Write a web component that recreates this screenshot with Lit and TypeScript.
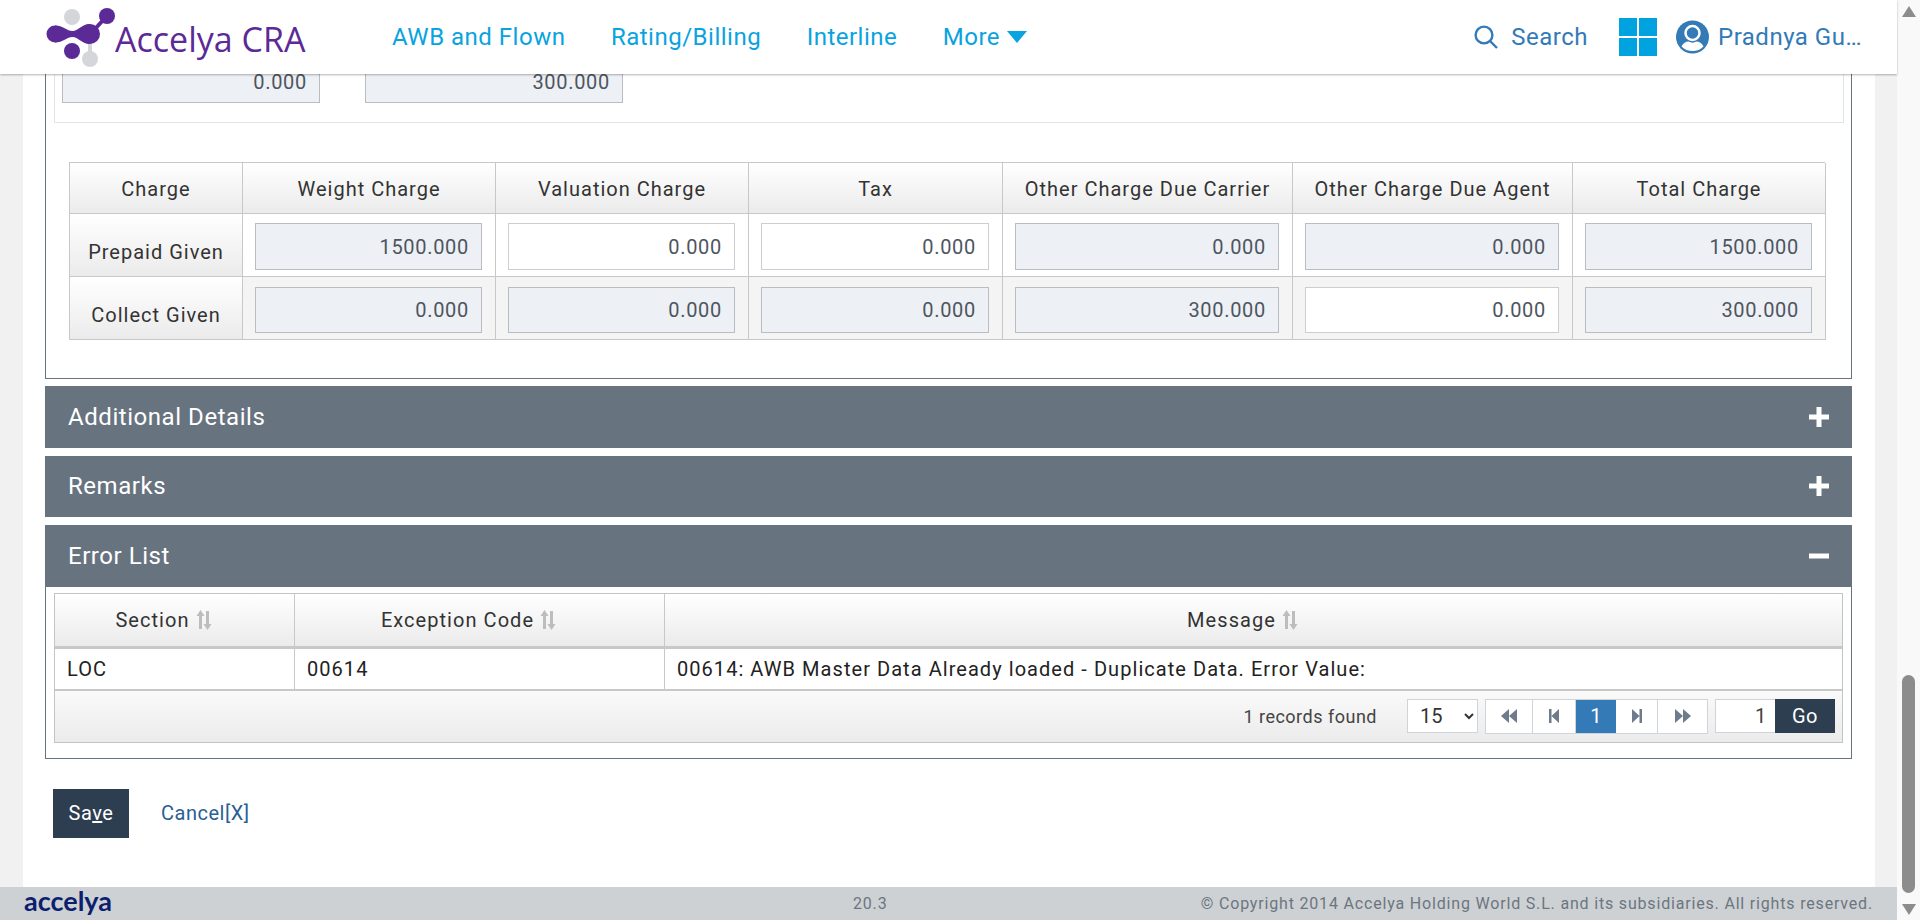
import { LitElement, html, css, svg } from "lit";
import { customElement } from "lit/decorators.js";

const rows = [
  { label: "Prepaid Given", cls: "", values: [["1500.000", 1], ["0.000", 0], ["0.000", 0], ["0.000", 1], ["0.000", 1], ["1500.000", 1]] },
  { label: "Collect Given", cls: "alt", values: [["0.000", 1], ["0.000", 1], ["0.000", 1], ["300.000", 1], ["0.000", 0], ["300.000", 1]] },
];
const heads = ["Charge", "Weight Charge", "Valuation Charge", "Tax", "Other Charge Due Carrier", "Other Charge Due Agent", "Total Charge"];

const sortIcon = svg`<svg class="sort" width="16" height="20" viewBox="0 0 16 20">
  <path d="M4.5 0 L8.5 6 H6 V19 H3 V6 H.5 Z" fill="#bdbdbd"/>
  <path d="M11.5 20 L7.5 14 H10 V1 H13 V14 H15.5 Z" fill="#bdbdbd"/>
</svg>`;

@customElement("app-root")
export class AppRoot extends LitElement {
  static styles = css`
    :host { display: block; height: 920px; overflow: hidden; font-family: Roboto, sans-serif; color: #333; }
    * { box-sizing: border-box; }
    .root { display: flex; height: 920px; }
    .page { width: 1897px; display: flex; flex-direction: column; background: #f1f1f1; }

    header { height: 74px; flex: none; background: #fff; display: flex; align-items: center; padding: 0 36px 0 45px; box-shadow: 0 1px 2px rgba(0,0,0,.3); position: relative; z-index: 2; }
    .logo { width: 70px; height: 64px; flex: none; }
    .brand { font-family: "Open Sans", sans-serif; font-size: 34px; font-weight: 500; color: #5b2a96; width: 190px; white-space: nowrap; padding-top: 3px; }
    nav { display: flex; gap: 45.5px; margin-left: 87px; font-size: 24px; letter-spacing: .5px; color: #09a3e0; }
    .more { display: flex; align-items: center; gap: 7px; }
    .tools { margin-left: auto; display: flex; align-items: center; color: #337ab7; font-size: 24px; letter-spacing: .5px; }
    .search-label { margin-left: 13px; }
    .tiles { margin-left: 31px; width: 38px; height: 38px; display: grid; grid-template-columns: 1fr 1fr; grid-template-rows: 1fr 1fr; gap: 2px; }
    .tiles i { background: #00a3e0; }
    .user { margin-left: 19px; }
    .name { margin-left: 9px; width: 143px; white-space: nowrap; }

    main { flex: 1; min-height: 0; margin: 0 22px 0 23px; padding: 0 23px 0 22px; background: #fff; }

    .panel { border: 1px solid #67737f; border-top: 0; }
    .clip { height: 49px; margin: 0 7px 0 8px; padding: 0 7px 19px; border: 1px solid #e4e4e4; border-top: 0; display: flex; align-items: flex-end; gap: 45px; overflow: hidden; }
    input { font: inherit; font-size: 20px; letter-spacing: .7px; height: 47px; border: 1px solid #ccced3; background: #fff; color: #4d5560; text-align: right; padding: 0 12px; outline: none; width: 100%; }
    input.ro { background: #edf0f4; border-color: #b9bcc0; }
    .clip input { width: 258px; height: 42px; flex: none; }

    .charges { margin: 39px 26px 38px 23px; display: grid; grid-template-columns: 173px 253px 253px 254px 290px 280px 253px; border-top: 1px solid #c8c8c8; border-left: 1px solid #c8c8c8; font-size: 20px; letter-spacing: 1px; }
    .cell { border-right: 1px solid #c8c8c8; border-bottom: 1px solid #c8c8c8; }
    .th { height: 51px; padding-top: 2px; display: flex; align-items: center; justify-content: center; background: linear-gradient(#fff, #ebebeb); color: #333; white-space: nowrap; }
    .lbl { height: 63px; padding-top: 13px; display: flex; align-items: center; justify-content: center; background: linear-gradient(#fff, #ebebeb); }
    .td { height: 63px; padding: 9px 13px 0 12px; }
    .td.alt { background: #f4f4f4; padding-top: 10px; }
    .td.alt input { height: 46px; }

    .bar { height: 61.6px; margin-top: 8px; background: #67737f; color: #fff; font-size: 24px; letter-spacing: .55px; display: flex; align-items: center; justify-content: space-between; padding: 0 23px 0 23px; }
    .bar.first { margin-top: 7px; }
    .bar svg { display: block; }

    .errors { border: 1px solid #67737f; border-top: 0; padding: 6px 8px 15px; }
    .grid { border: 1px solid #c4c4c4; font-size: 20px; letter-spacing: 1.05px; }
    .grow { display: grid; grid-template-columns: 240px 370px 1fr; }
    .ghead { height: 55px; border-bottom: 3px solid #c8c8c8; }
    .ghead div { display: flex; align-items: center; justify-content: center; gap: 6px; padding-right: 22px; background: linear-gradient(#fff, #ebebeb); border-right: 1px solid #c8c8c8; }
    .gbody { height: 42px; border-bottom: 2px solid #c8c8c8; color: #222; }
    .gbody div { display: flex; align-items: center; padding-left: 12px; border-right: 1px solid #c8c8c8; }
    .ghead div:last-child, .gbody div:last-child { border-right: 0; }
    .gfoot { height: 51px; background: linear-gradient(#fafafa, #ebebeb); display: flex; align-items: center; justify-content: flex-end; padding-right: 7px; font-size: 18px; letter-spacing: .5px; }
    .found { margin-right: 30px; color: #444; }
    select { width: 71px; height: 34px; background: #fff; border: 1px solid #d0d3d9; font: inherit; font-size: 20px; letter-spacing: 0; color: #333; padding-left: 8px; outline: none; }
    .pager { margin-left: 7px; display: flex; height: 35px; border: 1px solid #cfd3da; background: #fff; font-size: 20px; }
    .pager span { display: flex; align-items: center; justify-content: center; border-right: 1px solid #cfd3da; }
    .pager span:last-child { border-right: 0; }
    .p1 { width: 47px; }
    .p2 { width: 43px; }
    .p3 { width: 40px; background: #337ab7; color: #fff; border-right: 0 !important; }
    .p4 { width: 42px; }
    .p5 { width: 49px; }
    .goto { margin-left: 7px; width: 60px !important; height: 34px; border: 1px solid #d0d3d9; border-right: 0; padding: 0 8px; font-size: 20px; color: #444; }
    .go { width: 60px; height: 34px; background: #2c3e50; color: #fff; display: flex; align-items: center; justify-content: center; font-size: 20px; }

    .actions { margin: 30px 0 0 8px; display: flex; align-items: center; font-size: 20px; letter-spacing: .5px; }
    .save { width: 76px; height: 49px; background: #2c3e50; color: #fff; display: flex; align-items: center; justify-content: center; }
    .cancel { margin-left: 32px; color: #2a5f94; }

    footer { height: 33px; flex: none; background: #ced1d4; display: grid; grid-template-columns: 853px auto 1fr; align-items: center; color: #6b7681; font-size: 16px; letter-spacing: .82px; padding-right: 24px; }
    .mark { font-family: Lato, sans-serif; font-size: 27px; font-weight: 700; color: #0c1f6e; letter-spacing: 0; padding-left: 24px; line-height: 33px; margin-top: -6px; }
    .copy { text-align: right; }

    .scroll { width: 23px; background: #f9f9f9; position: relative; display: flex; flex-direction: column; align-items: center; justify-content: space-between; padding: 6px 0 5px; }
    .thumb { position: absolute; left: 5px; top: 675px; width: 13px; height: 218px; border-radius: 7px; background: #8c8c8c; }
  `;

  private pagerIcon(d: string) {
    return svg`<svg width="18" height="16" viewBox="0 0 18 16"><path d=${d} fill="#6d7b8a"/></svg>`;
  }

  render() {
    return html`
      <div class="root">
        <div class="page">
          <header>
            <svg class="logo" viewBox="0 0 70 64">
              <circle cx="27" cy="12" r="8" fill="#d4d6d9"/>
              <path d="M45 30 V50" stroke="#d4d6d9" stroke-width="4"/>
              <circle cx="45" cy="54" r="8" fill="#d4d6d9"/>
              <path d="M50 24 L60 13" stroke="#5b2a96" stroke-width="4" fill="none"/>
              <path d="M10 20.500 C18 20.500 22 26 27.500 26 C33 26 37 19 45 19 V39 C37 39 33 32 27.500 32 C22 32 18 37.500 10 37.500 Z" fill="#5b2a96"/>
              <circle cx="62" cy="11" r="8" fill="#5b2a96"/>
              <circle cx="10" cy="29" r="8.500" fill="#5b2a96"/>
              <circle cx="45" cy="29" r="10" fill="#5b2a96"/>
              <circle cx="27" cy="46" r="8" fill="#5b2a96"/>
            </svg>
            <div class="brand">Accelya CRA</div>
            <nav>
              <span>AWB and Flown</span>
              <span>Rating/Billing</span>
              <span>Interline</span>
              <span class="more">More
                <svg width="20" height="12" viewBox="0 0 20 12"><path d="M0 0 H20 L10 12 Z" fill="#09a3e0"/></svg>
              </span>
            </nav>
            <div class="tools">
              <svg width="24" height="24" viewBox="0 0 24 24" fill="none" stroke="#337ab7" stroke-width="2.4">
                <circle cx="10" cy="10" r="8.400"/><path d="M16 16 L23 23"/>
              </svg>
              <span class="search-label">Search</span>
              <div class="tiles"><i></i><i></i><i></i><i></i></div>
              <svg class="user" width="33" height="34" viewBox="0 0 33 34">
                <circle cx="16.500" cy="17" r="16.500" fill="#337ab7"/>
                <circle cx="16.500" cy="13" r="7" fill="none" stroke="#fff" stroke-width="2.500"/>
                <path d="M5.500 26.500 C7 23 10 21.500 12.500 21.500 C15 23 18 23 20.500 21.500 C23 21.500 26 23 27.500 26.500 C24.500 29.800 21 31 16.500 31 C12 31 8.500 29.800 5.500 26.500 Z" fill="#fff"/>
              </svg>
              <span class="name">Pradnya Gu…</span>
            </div>
          </header>

          <main>
            <div class="panel">
              <div class="clip">
                <input class="ro" readonly .value=${"0.000"} />
                <input class="ro" readonly .value=${"300.000"} />
              </div>
              <div class="charges">
                ${heads.map((h) => html`<div class="cell th">${h}</div>`)}
                ${rows.map((r) => html`
                  <div class="cell lbl">${r.label}</div>
                  ${r.values.map(([v, ro]) => html`
                    <div class="cell td ${r.cls}"><input class=${ro ? "ro" : ""} ?readonly=${!!ro} .value=${String(v)} /></div>
                  `)}
                `)}
              </div>
            </div>

            <div class="bar first">Additional Details ${this.plus()}</div>
            <div class="bar">Remarks ${this.plus()}</div>
            <div class="bar">Error List
              <svg width="20" height="20" viewBox="0 0 20 20"><rect y="7.500" width="20" height="5" fill="#fff"/></svg>
            </div>
            <div class="errors">
              <div class="grid">
                <div class="grow ghead">
                  <div>Section ${sortIcon}</div>
                  <div>Exception Code ${sortIcon}</div>
                  <div>Message ${sortIcon}</div>
                </div>
                <div class="grow gbody">
                  <div>LOC</div>
                  <div>00614</div>
                  <div>00614: AWB Master Data Already loaded - Duplicate Data. Error Value:</div>
                </div>
                <div class="gfoot">
                  <span class="found">1 records found</span>
                  <select><option>15</option></select>
                  <div class="pager">
                    <span class="p1">${this.pagerIcon("M9 1 V15 L1 8 Z M17 1 V15 L9 8 Z")}</span>
                    <span class="p2">${this.pagerIcon("M4 1 H6.500 V15 H4 Z M14 1 V15 L6.500 8 Z")}</span>
                    <span class="p3">1</span>
                    <span class="p4">${this.pagerIcon("M4 1 V15 L11.500 8 Z M11.500 1 H14 V15 H11.500 Z")}</span>
                    <span class="p5">${this.pagerIcon("M1 1 V15 L9 8 Z M9 1 V15 L17 8 Z")}</span>
                  </div>
                  <input class="goto" .value=${"1"} />
                  <div class="go">Go</div>
                </div>
              </div>
            </div>
            <div class="actions">
              <div class="save"><span>Sa<u>v</u>e</span></div>
              <span class="cancel">Cancel[X]</span>
            </div>
          </main>

          <footer>
            <div class="mark">accelya</div>
            <div>20.3</div>
            <div class="copy">© Copyright 2014 Accelya Holding World S.L. and its subsidiaries. All rights reserved.</div>
          </footer>
        </div>
        <div class="scroll">
          <svg width="14" height="11" viewBox="0 0 14 11"><path d="M7 0 L14 11 H0 Z" fill="#8c8c8c"/></svg>
          <div class="thumb"></div>
          <svg width="14" height="11" viewBox="0 0 14 11"><path d="M0 0 H14 L7 11 Z" fill="#8c8c8c"/></svg>
        </div>
      </div>
    `;
  }

  private plus() {
    return svg`<svg width="20" height="20" viewBox="0 0 20 20"><path d="M7.500 0 H12.500 V7.500 H20 V12.500 H12.500 V20 H7.500 V12.500 H0 V7.500 H7.500 Z" fill="#fff"/></svg>`;
  }
}
